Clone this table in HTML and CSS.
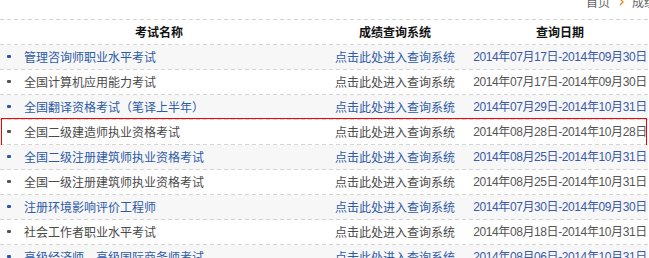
FILE: index.html
```html
<!DOCTYPE html>
<html lang="zh-CN">
<head>
<meta charset="utf-8">
<title>成绩查询</title>
<link rel="stylesheet" href="styles.css">
</head>
<body>
<div class="page">
  <div class="crumbs">
    <span class="crumb">首页</span>
    <svg class="chev" width="5" height="8" viewBox="0 0 5 8"><path d="M1 1 L4 4 L1 7" fill="none" stroke="#e08a2c" stroke-width="1.3"/></svg>
    <span class="crumb">成绩查询</span>
  </div>
  <div class="table">
    <div class="row head">
      <div class="c1 center">考试名称</div>
      <div class="c2">成绩查询系统</div>
      <div class="c3">查询日期</div>
    </div>
    <div class="row odd">
      <div class="c1"><i class="dot"></i>管理咨询师职业水平考试</div>
      <div class="c2">点击此处进入查询系统</div>
      <div class="c3 date">2014年07月17日-2014年09月30日</div>
    </div>
    <div class="row even">
      <div class="c1"><i class="dot"></i>全国计算机应用能力考试</div>
      <div class="c2">点击此处进入查询系统</div>
      <div class="c3 date">2014年07月17日-2014年09月30日</div>
    </div>
    <div class="row odd">
      <div class="c1"><i class="dot"></i>全国翻译资格考试（笔译上半年）</div>
      <div class="c2">点击此处进入查询系统</div>
      <div class="c3 date">2014年07月29日-2014年10月31日</div>
    </div>
    <div class="row even active">
      <div class="c1"><i class="dot"></i>全国二级建造师执业资格考试</div>
      <div class="c2">点击此处进入查询系统</div>
      <div class="c3 date">2014年08月28日-2014年10月28日</div>
    </div>
    <div class="row odd">
      <div class="c1"><i class="dot"></i>全国二级注册建筑师执业资格考试</div>
      <div class="c2">点击此处进入查询系统</div>
      <div class="c3 date">2014年08月25日-2014年10月31日</div>
    </div>
    <div class="row even">
      <div class="c1"><i class="dot"></i>全国一级注册建筑师执业资格考试</div>
      <div class="c2">点击此处进入查询系统</div>
      <div class="c3 date">2014年08月25日-2014年10月31日</div>
    </div>
    <div class="row odd">
      <div class="c1"><i class="dot"></i>注册环境影响评价工程师</div>
      <div class="c2">点击此处进入查询系统</div>
      <div class="c3 date">2014年07月30日-2014年09月30日</div>
    </div>
    <div class="row even">
      <div class="c1"><i class="dot"></i>社会工作者职业水平考试</div>
      <div class="c2">点击此处进入查询系统</div>
      <div class="c3 date">2014年08月18日-2014年10月31日</div>
    </div>
    <div class="row odd">
      <div class="c1"><i class="dot"></i>高级经济师、高级国际商务师考试</div>
      <div class="c2">点击此处进入查询系统</div>
      <div class="c3 date">2014年08月06日-2014年10月31日</div>
    </div>
  </div>
</div>
</body>
</html>
```

FILE: styles.css
```css
html, body {
  margin: 0;
  padding: 0;
  background: #fff;
}
body {
  font-family: "Noto Sans CJK SC", sans-serif;
  font-size: 12px;
  color: #444;
  overflow: hidden;
}
.page {
  width: 649px;
  overflow: hidden;
}
.crumbs {
  display: flex;
  align-items: center;
  gap: 6px;
  height: 14px;
  margin-top: -5px;
  margin-bottom: 10px;
  padding-left: 586px;
  white-space: nowrap;
  line-height: 14px;
  color: #666;
}
.chev {
  flex: none;
  margin: 0 2px 0 3px;
}
.table {
  width: 648px;
  background-image: repeating-linear-gradient(to right, #d4d4d4 0 4px, transparent 4px 7px);
  background-size: 100% 1px;
  background-repeat: no-repeat;
  padding-top: 1px;
}
.row {
  position: relative;
  display: grid;
  grid-template-columns: 318px 154px 176px;
  height: 25px;
  line-height: 24px;
  box-sizing: border-box;
  padding-bottom: 1px;
  background-image: repeating-linear-gradient(to right, #d4d4d4 0 4px, transparent 4px 7px);
  background-size: 100% 1px;
  background-position: left bottom;
  background-repeat: no-repeat;
  white-space: nowrap;
}
.row > div {
  overflow: visible;
}
.c1 {
  display: flex;
  align-items: center;
}
.c1.center {
  justify-content: center;
}
.c2, .c3 {
  text-align: center;
}
.head {
  font-weight: bold;
  color: #111;
}
.odd {
  background-color: #f7f7f7;
  color: #2d5aa8;
}
.even {
  color: #4a4a4a;
}
.dot {
  display: block;
  width: 4px;
  height: 3px;
  border-radius: 1px;
  background: currentColor;
  margin: -1px 13px 0 7px;
}
.odd .dot {
  background: #2b55b0;
}
.even .dot {
  background: #555;
}
.date {
  font-family: "Liberation Sans", "Noto Sans CJK SC", sans-serif;
  letter-spacing: -0.4px;
}
.odd .date {
  color: #3a5aa8;
}
.even .date {
  color: #555;
}
.active::after {
  content: "";
  position: absolute;
  left: 1px;
  right: 1px;
  top: -2px;
  bottom: -1px;
  border: 1px solid #f00;
  pointer-events: none;
}
```
